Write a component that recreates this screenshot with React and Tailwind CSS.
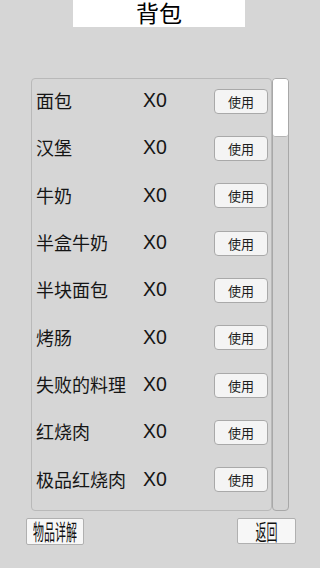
import React from 'react';

const items = ['面包', '汉堡', '牛奶', '半盒牛奶', '半块面包', '烤肠', '失败的料理', '红烧肉', '极品红烧肉'];

const font = { fontFamily: '"Noto Sans CJK SC", "Noto Sans", sans-serif' };

function ItemRow({ name }) {
  return (
    <div className="h-[47.33px] flex items-center text-[#151515]">
      <span className="w-[111px] pl-[4px] mb-[4px] text-[18px] leading-normal whitespace-nowrap">{name}</span>
      <span className="w-[71px] mb-[4px] text-[19.5px] leading-normal" style={{ fontFamily: '"Liberation Sans", Arial, sans-serif' }}>X0</span>
      <button
        type="button"
        className="w-[54px] h-[25px] mb-[3px] rounded-[4px] border border-[#a9a9a9] bg-[#f4f4f4] text-[13px] leading-none text-[#1e1e1e] flex items-center justify-center"
      >
        使用
      </button>
    </div>
  );
}

export default function App() {
  return (
    <div className="w-[320px] h-[568px] bg-[#d6d6d6] overflow-hidden relative" style={font}>
      <div className="ml-[73px] w-[172px] h-[27px] bg-white flex items-start justify-center">
        <span className="text-[23px] leading-[25px] text-black">背包</span>
      </div>

      <div className="mt-[51px] ml-[31px] flex">
        <div className="w-[241px] h-[433px] border border-[#b9b9b9] rounded-[4px] overflow-hidden">
          {items.map((name) => (
            <ItemRow key={name} name={name} />
          ))}
        </div>
        <div className="w-[17px] h-[433px] border border-[#a8a8a8] rounded-[4px] bg-[#d3d3d3] relative">
          <div className="absolute left-0 right-0 top-0 h-[58px] bg-white border-b border-[#b5b5b5] rounded-[3px]" />
        </div>
      </div>

      <div className="mt-[7px] flex">
        <button
          type="button"
          className="ml-[26px] w-[58px] h-[27px] bg-[#f7f7f7] border border-[#b0b0b0] rounded-[2px] flex items-center justify-center"
        >
          <span className="inline-block text-[11px] leading-none text-[#111] scale-y-[1.95] whitespace-nowrap">物品详解</span>
        </button>
        <button
          type="button"
          className="ml-[153px] w-[59px] h-[26px] bg-[#f7f7f7] border border-[#b0b0b0] rounded-[2px] flex items-center justify-center"
        >
          <span className="inline-block text-[11px] leading-none text-[#111] scale-y-[1.95] whitespace-nowrap">返回</span>
        </button>
      </div>
    </div>
  );
}
